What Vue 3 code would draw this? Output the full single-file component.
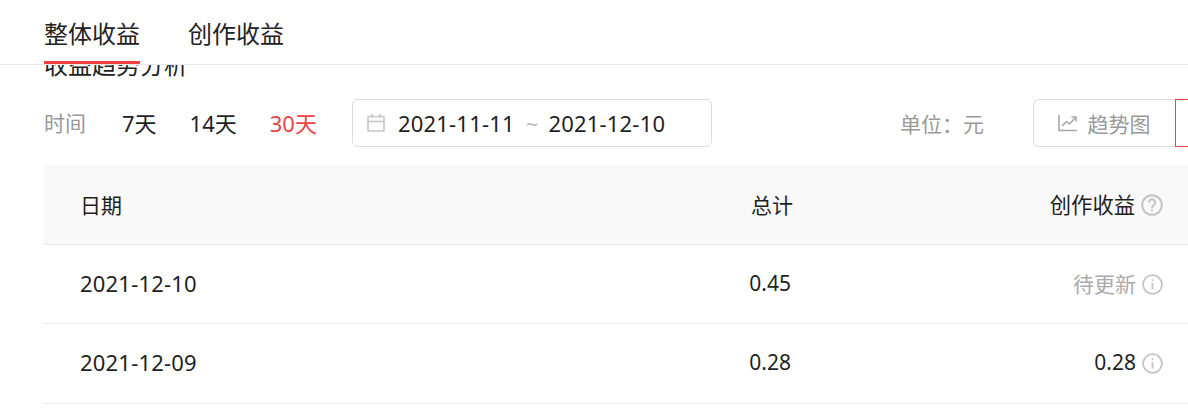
<script setup>
const rows = [
  { date: '2021-12-10', total: '0.45', income: '待更新', pending: true },
  { date: '2021-12-09', total: '0.28', income: '0.28', pending: false }
]
</script>

<template>
  <div class="page">
    <nav class="tabs">
      <a class="tab active">整体收益</a>
      <a class="tab">创作收益</a>
    </nav>

    <div class="clipped-title"><span>收益趋势分析</span></div>

    <div class="filters">
      <span class="label">时间</span>
      <span class="range">7天</span>
      <span class="range">14天</span>
      <span class="range on">30天</span>
      <div class="picker">
        <svg class="cal" width="18" height="18" viewBox="0 0 18 18" fill="none" stroke="#c8c8c8" stroke-width="1.7">
          <rect x="1" y="2.5" width="16" height="14.5" rx="1"/>
          <line x1="1" y1="7.5" x2="17" y2="7.5"/>
          <line x1="5" y1="0" x2="5" y2="4"/>
          <line x1="13" y1="0" x2="13" y2="4"/>
        </svg>
        <span class="day">2021-11-11</span>
        <span class="tilde">~</span>
        <span class="day">2021-12-10</span>
      </div>
      <span class="unit">单位：元</span>
      <div class="switch">
        <button class="btn">
          <svg width="20" height="18" viewBox="0 0 20 18" fill="none" stroke="#a8a8a8" stroke-width="1.6">
            <path d="M1 1v15.5h18"/>
            <path d="M4 12l4.5-4.5 3 2.5L17.5 3.5"/>
            <path d="M13.5 3h4.5v4.5"/>
          </svg>
          趋势图
        </button>
        <button class="btn next"></button>
      </div>
    </div>

    <div class="table">
      <div class="row head">
        <div>日期</div>
        <div class="c-total">总计</div>
        <div class="c-income">
          创作收益
          <svg class="hint" width="22" height="22" viewBox="0 0 22 22" fill="none" stroke="#c4c4c4" stroke-width="2">
            <circle cx="11" cy="11" r="9.8"/>
            <path d="M7.8 8.6a3.2 3.2 0 1 1 5 2.6c-1.2.8-1.8 1.3-1.8 2.7"/>
            <line x1="11" y1="15.2" x2="11" y2="17.2"/>
          </svg>
        </div>
      </div>
      <div v-for="r in rows" :key="r.date" class="row body">
        <div class="date">{{ r.date }}</div>
        <div class="c-total">{{ r.total }}</div>
        <div class="c-income" :class="{ pending: r.pending }">
          {{ r.income }}
          <svg class="hint" width="21" height="21" viewBox="0 0 21 21" fill="none" stroke="#c4c4c4" stroke-width="1.8">
            <circle cx="10.5" cy="10.5" r="9.4"/>
            <line x1="10.5" y1="9" x2="10.5" y2="15.5"/>
            <line x1="10.5" y1="5.2" x2="10.5" y2="7.2"/>
          </svg>
        </div>
      </div>
    </div>
  </div>
</template>

<style scoped>
.page {
  width: 1188px;
  height: 413px;
  overflow: hidden;
  background: #fff;
  color: #1f1f1f;
  font-family: "Noto Sans", "Noto Sans CJK SC", sans-serif;
  font-size: 22px;
}

.tabs {
  display: flex;
  gap: 48px;
  height: 64px;
  padding-left: 44px;
  border-bottom: 1px solid #e8e8e8;
}

.tab {
  height: 64px;
  box-sizing: border-box;
  padding-top: 16px;
  font-size: 24px;
  line-height: 36px;
  color: #222;
}

.tab.active {
  border-bottom: 3px solid #f04142;
}

/* heading scrolled under the tab bar, only its lower part shows */
.clipped-title {
  height: 12px;
  overflow: hidden;
  position: relative;
}

.clipped-title span {
  position: absolute;
  left: 44px;
  bottom: 1px;
  font-size: 24px;
  line-height: 22px;
  color: #222;
}

.filters {
  display: flex;
  align-items: center;
  height: 48px;
  margin-top: 22px;
  padding-left: 44px;
}

.label {
  width: 78px;
  color: #999;
  font-size: 21px;
  margin-top: -2px;
}

.range {
  margin-right: 33px;
  margin-top: -2px;
}

.range.on {
  color: #f04142;
  margin-right: 35px;
}

.picker {
  display: flex;
  align-items: center;
  width: 360px;
  height: 48px;
  box-sizing: border-box;
  padding-left: 14px;
  border: 1px solid #ddd;
  border-radius: 6px;
}

.cal {
  margin-right: 13px;
}

.day {
  letter-spacing: 0.2px;
}

.tilde {
  margin: 0 10px 0 11px;
  color: #bbb;
}

.unit {
  margin-left: 188px;
  width: 133px;
  color: #999;
  font-size: 21px;
}

.switch {
  display: flex;
  flex: 1;
}

.btn {
  display: flex;
  align-items: center;
  justify-content: center;
  gap: 9px;
  width: 142px;
  height: 48px;
  padding: 0;
  background: #fff;
  border: 1px solid #ddd;
  border-right: none;
  border-radius: 6px 0 0 6px;
  color: #999;
  font: inherit;
  font-size: 21px;
}

.btn.next {
  flex: 1;
  width: auto;
  border: 1px solid #f04142;
  border-right: none;
  border-radius: 0;
}

.table {
  margin: 18px 0 0 44px;
}

.row {
  display: grid;
  grid-template-columns: 1fr 130px 395px;
  align-items: center;
  height: 79.4px;
  box-sizing: border-box;
  padding-left: 36px;
  border-bottom: 1px solid #e8e8e8;
}

.row.head {
  height: 80px;
  padding-bottom: 2px;
  background: #f9f9f9;
  font-size: 21px;
}

.row.body {
  padding-bottom: 3px;
}

.date {
  letter-spacing: 0.2px;
}

.c-total {
  text-align: right;
}

.body .c-total {
  padding-right: 2px;
  font-size: 21px;
}

.c-income {
  display: flex;
  align-items: center;
  justify-content: flex-end;
  gap: 6px;
  padding-right: 25px;
  font-size: 21px;
}

.head .c-income {
  gap: 6px;
  font-size: 21.3px;
}

.pending {
  color: #aaa;
}

.hint {
  flex: none;
  margin-top: 3px;
}
</style>

<style>
html, body {
  margin: 0;
  background: #fff;
}
</style>
